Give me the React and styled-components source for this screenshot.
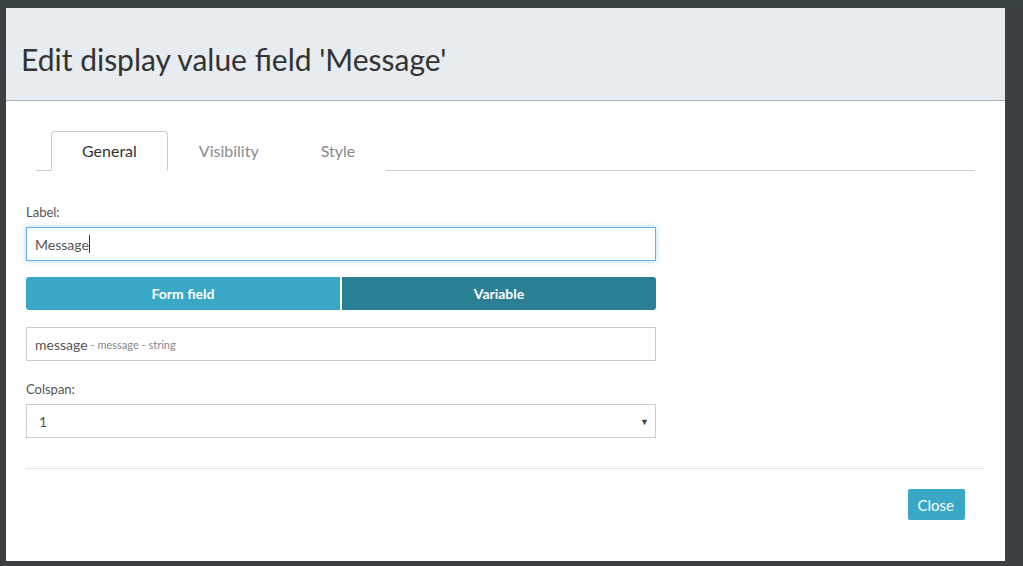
import React from 'react'
import styled, { createGlobalStyle } from 'styled-components'

const GlobalStyle = createGlobalStyle`
  html, body {
    margin: 0;
    padding: 0;
    background: #3d4042;
    font-family: Lato, "Open Sans", sans-serif;
  }
`

const Page = styled.div`
  width: 1023px;
  height: 566px;
  padding: 8px 0 0 6px;
  box-sizing: border-box;
  background: linear-gradient(#3a4446 0, #3d4042 8px);
`

const Modal = styled.div`
  width: 999px;
  height: 553px;
  background: #fff;
  display: flex;
  flex-direction: column;
`

const Header = styled.div`
  height: 93px;
  background: #e7ecf0;
  border-bottom: 1px solid #a9b0b7;
  display: flex;
  align-items: center;
  padding: 10px 15px 0;
  box-sizing: border-box;
`

const Title = styled.h4`
  margin: 0;
  font-size: 30px;
  font-weight: 400;
  color: #333;
`

const Body = styled.div`
  padding: 30px 20px 0;
`

const TabBar = styled.div`
  display: flex;
  margin: 0 10px;
  padding-left: 15px;
  border-bottom: 1px solid #ccc;
  height: 39px;
`

const Tab = styled.div`
  padding: 0 30px;
  font-size: 16px;
  line-height: 38px;
  color: ${p => (p.$active ? '#333' : '#8a8a8a')};
  border: 1px solid ${p => (p.$active ? '#ccc' : 'transparent')};
  border-bottom-color: ${p => (p.$active ? '#fff' : 'transparent')};
  border-radius: 4px 4px 0 0;
  background: #fff;
  margin-bottom: -1px;
`

const Form = styled.div`
  width: 630px;
  padding-top: 32px;
`

const Label = styled.div`
  font-size: 13px;
  color: #555;
  line-height: 18px;
  margin-bottom: 6px;
`

const Field = styled.div`
  height: 34px;
  box-sizing: border-box;
  border: 1px solid ${p => (p.$focus ? '#66afe9' : '#ccc')};
  box-shadow: ${p => (p.$focus ? '0 0 6px rgba(102,175,233,.5)' : 'none')};
  display: flex;
  align-items: center;
  padding: 0 8px;
  font-size: 14px;
  color: #555;
  margin-bottom: ${p => p.$mb || 0}px;
`

const Caret = styled.span`
  display: inline-block;
  width: 1px;
  height: 18px;
  background: #333;
`

const Hint = styled.span`
  font-size: 11px;
  color: #888;
  margin-left: 3px;
`

const Toggle = styled.div`
  display: flex;
  gap: 2px;
  height: 33px;
  margin-bottom: 17px;
`

const ToggleButton = styled.div`
  flex: 1;
  background: ${p => (p.$on ? '#2b7f95' : '#38a8c6')};
  color: #fff;
  font-size: 14px;
  font-weight: 700;
  display: flex;
  align-items: center;
  justify-content: center;
  border-radius: ${p => (p.$first ? '3px 0 0 3px' : '0 3px 3px 0')};
`

const Select = styled(Field)`
  justify-content: space-between;
  padding: 0 6px 0 12px;
`

const Arrow = styled.span`
  font-size: 9px;
  color: #444;
`

const Divider = styled.div`
  border-top: 1px solid #e5e5e5;
  margin-top: 30px;
`

const Footer = styled.div`
  display: flex;
  justify-content: flex-end;
  padding: 20px 20px 0;
`

const Button = styled.div`
  background: #38a8c6;
  color: #fff;
  font-size: 15px;
  height: 31px;
  padding: 0 11px 0 10px;
  border-radius: 2px;
  display: flex;
  align-items: center;
`

export default function App() {
  return (
    <Page>
      <GlobalStyle />
      <Modal>
        <Header>
          <Title>Edit display value field 'Message'</Title>
        </Header>
        <Body>
          <TabBar>
            <Tab $active>General</Tab>
            <Tab>Visibility</Tab>
            <Tab>Style</Tab>
          </TabBar>
          <Form>
            <Label>Label:</Label>
            <Field $focus $mb={16}>
              Message<Caret />
            </Field>
            <Toggle>
              <ToggleButton $first>Form field</ToggleButton>
              <ToggleButton $on>Variable</ToggleButton>
            </Toggle>
            <Field $mb={19}>
              message<Hint>- message - string</Hint>
            </Field>
            <Label>Colspan:</Label>
            <Select>
              1<Arrow>▼</Arrow>
            </Select>
          </Form>
          <Divider />
          <Footer>
            <Button>Close</Button>
          </Footer>
        </Body>
      </Modal>
    </Page>
  )
}
